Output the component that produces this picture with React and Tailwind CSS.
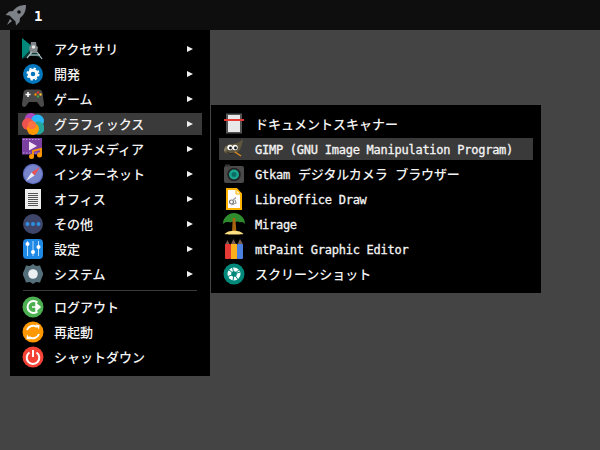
const font = { fontFamily: '"DejaVu Sans Mono","Noto Sans CJK JP",monospace' };

function I({ children }) {
  return <svg width="22" height="22" viewBox="0 0 22 22" className="shrink-0">{children}</svg>;
}

const Acc = () => <I>
  <path d="M0 0 L11 9 L0 21Z" fill="#00897b" />
  <path d="M0 21 L11 9 L21 21 L14 18 L8 18Z" fill="#0a3a36" />
  <path d="M9 4h5l.5 4 1.500 1-1 6H8l-1-6 1.500-1z" fill="#7f8589" />
  <circle cx="11.500" cy="9" r="1.800" fill="#e8e8e8" />
  <path d="M5 20 L10 14M20 21 L15 14" stroke="#b0bec5" strokeWidth="1.200" />
  <path d="M8 17h10" stroke="#cfd8dc" strokeWidth="1" />
</I>;
const Dev = () => <I>
  <circle cx="11" cy="11" r="10" fill="#0277bd" />
  <circle cx="11" cy="11" r="3.800" fill="none" stroke="#fff" strokeWidth="3" />
  <circle cx="11" cy="11" r="5.800" fill="none" stroke="#fff" strokeWidth="1.500" strokeDasharray="2.300 2.250" />
</I>;
const Game = () => <I>
  <path d="M5 1.500h12c2 0 3 1 3.500 3L22 16c.3 3-2.500 4-4 2l-3-4H7l-3 4c-1.500 2-4.300 1-4-2L1.500 4.500C2 2.500 3 1.500 5 1.500z" fill="#4a4a4a" />
  <path d="M3.500 6.500h5M6 4v5" stroke="#fff" strokeWidth="1.600" />
  <circle cx="16" cy="4.500" r="1.200" fill="#e53935" />
  <circle cx="18.500" cy="6.500" r="1.200" fill="#fbc02d" />
  <circle cx="13.500" cy="6.500" r="1.200" fill="#fb8c00" />
  <circle cx="16" cy="8.500" r="1.200" fill="#43a047" />
</I>;
const Gfx = () => <I>
  <circle cx="9" cy="6.500" r="6.500" fill="#ab47bc" />
  <circle cx="15.500" cy="8" r="6.500" fill="#29b6f6" />
  <circle cx="16" cy="15" r="6.500" fill="#26a69a" />
  <circle cx="6" cy="11" r="6" fill="#ef5350" />
  <circle cx="11" cy="16" r="6" fill="#ff9800" />
  <circle cx="10" cy="12" r="4" fill="#ff7043" />
</I>;
const Media = () => <I>
  <rect x="0" y="0" width="20" height="16.500" fill="#7b3fa0" />
  <path d="M1 1.500h18M1 15h18" stroke="#b39ddb" strokeWidth="1.200" strokeDasharray="1.500 1.500" />
  <path d="M7 3.500l8 4.500-8 4.500z" fill="#f3e5f5" />
  <path d="M11 18V13l8-2v6" fill="none" stroke="#ff9800" strokeWidth="1.800" />
  <circle cx="9.500" cy="18.500" r="2.500" fill="#ff9800" />
  <circle cx="17.500" cy="17" r="2.500" fill="#ff9800" />
</I>;
const Net = () => <I>
  <circle cx="11" cy="11" r="10.200" fill="#5c6bc0" />
  <circle cx="11" cy="11" r="9" fill="#7986cb" />
  <path d="M18 4 L12.500 12.500 L9.500 9.500Z" fill="#ef5350" />
  <path d="M4 18 L9.500 9.500 L12.500 12.500Z" fill="#e8eaf6" />
</I>;
const Office = () => <I>
  <rect x="3" y="1" width="16" height="20" fill="#eeeeee" />
  <path d="M6 5.500h10M6 7.500h10M6 9.500h10M6 11.500h10M6 13.500h10M6 15.500h10M6 17.500h10" stroke="#555" strokeWidth="1" />
</I>;
const Other = () => <I>
  <circle cx="11" cy="11" r="10" fill="#3f4568" />
  <circle cx="5.500" cy="11" r="2" fill="#2f8fe0" />
  <circle cx="11" cy="11" r="2" fill="#2f8fe0" />
  <circle cx="16.500" cy="11" r="2" fill="#2f8fe0" />
</I>;
const Settings = () => <I>
  <rect x="1" y="1" width="20" height="20" rx="4" fill="#1e88e5" />
  <path d="M5.500 3v15M11 3v15M16.500 3v15" stroke="#bbdefb" strokeWidth="1" />
  <circle cx="5.500" cy="6" r="2" fill="#fff" />
  <circle cx="11" cy="14" r="2" fill="#fff" />
  <circle cx="16.500" cy="9" r="2" fill="#fff" />
</I>;
const Sys = () => <I>
  <path d="M11 1l3 2 4-.5 1.500 4L21 10v2l-1.500 3.500-1.500 4-4-.5-3 2-3-2-4 .5-1.500-4L1 12v-2l1.500-3.500 1.500-4 4 .5z" fill="#546e7a" />
  <circle cx="11" cy="11" r="4.800" fill="#eceff1" />
</I>;
const Logout = () => <I>
  <circle cx="11" cy="11" r="10.500" fill="#4caf50" />
  <path d="M15.500 6.500A6 6 0 1 0 15.500 15.500" fill="none" stroke="#fff" strokeWidth="2" />
  <path d="M10 11h5M14 7.500l4 3.500-4 3.500z" fill="#fff" stroke="#fff" strokeWidth="1.500" />
</I>;
const Reboot = () => <I>
  <circle cx="11" cy="11" r="10.500" fill="#ff9800" />
  <path d="M5 9a6.500 6.500 0 0 1 10-3" fill="none" stroke="#fff" strokeWidth="2" />
  <path d="M17 13a6.500 6.500 0 0 1-10 3" fill="none" stroke="#fff" strokeWidth="2" />
  <path d="M13.500 3.500l4 .5-.5 4.500zM8.500 18.500l-4-.5.5-4.500z" fill="#fff" />
</I>;
const Power = () => <I>
  <circle cx="11" cy="11" r="10.500" fill="#f44336" />
  <path d="M7.500 6.500a6.300 6.300 0 1 0 7 0" fill="none" stroke="#fff" strokeWidth="2" />
  <path d="M11 4v7" stroke="#fff" strokeWidth="2" />
</I>;
const Scanner = () => <I>
  <rect x="3" y="0.500" width="16" height="20" fill="#545454" />
  <rect x="5" y="2" width="12" height="17" fill="#e8e8e8" />
  <rect x="1" y="6" width="20" height="2" fill="#e53935" />
</I>;
const Gimp = () => <I>
  <path d="M1 13c0-4 3-7 7-7 5 0 9-2 12-5-1 6-2 12-7 14-5 2-12 1-12-2z" fill="#5f5640" />
  <path d="M3 8c-1 1-2 3-2 5 2 1 3-1 3-3z" fill="#8a7f63" />
  <circle cx="7" cy="9.500" r="2.700" fill="#fff" />
  <circle cx="12" cy="9.500" r="2.700" fill="#fff" />
  <circle cx="7.500" cy="10" r="1.400" fill="#111" />
  <circle cx="12.500" cy="10" r="1.400" fill="#111" />
  <path d="M12 14l6 4" stroke="#d68a1e" strokeWidth="1.500" />
  <path d="M4 14c2 2 5 2 7 1" stroke="#222" strokeWidth="1" fill="none" />
</I>;
const Gtkam = () => <I>
  <rect x="1" y="3" width="20" height="17" rx="2" fill="#4a4a4a" />
  <rect x="2" y="1.500" width="5" height="2" fill="#333" />
  <circle cx="11" cy="11.500" r="6.800" fill="#222" />
  <circle cx="11" cy="11.500" r="5" fill="#1aa38e" />
  <circle cx="11" cy="11.500" r="2.500" fill="#0b6d62" />
</I>;
const Draw = () => <I>
  <path d="M4 1h9.500l4.500 5v15h-14z" fill="#fff" stroke="#ffb300" strokeWidth="2" />
  <path d="M13 1.500v4.500h4.500" fill="#fff3c4" stroke="#ffb300" strokeWidth="1" />
  <circle cx="8.500" cy="14" r="2" fill="none" stroke="#777" strokeWidth="1.200" />
  <path d="M10 12l3-2.500M8.500 17l4.500-2-1-3" fill="none" stroke="#999" strokeWidth="1.200" />
</I>;
const Mirage = () => <I>
  <path d="M0 11C0 4 6 0 11 0s11 4 11 11c-2-2-3.500-2.500-5-1.500-1.500-1.500-3.500-1.500-5 0-1.500-1-3.500-1-5 0C5 8.500 2 9 0 11z" fill="#2e8b2e" />
  <path d="M9.800 5h2.400l1.300 14h-4.500z" fill="#a8640f" />
  <path d="M1.500 21c3-4.500 16-4.500 19 0 0 .6-19 .6-19 0z" fill="#ffe082" />
</I>;
const MtPaint = () => <I>
  <path d="M2 7l2.500-5L7 7zM8 6l2.500-5L13 6zM14.500 6l2.500-5 3 5z" fill="#7a5c50" />
  <rect x="2" y="6" width="6" height="15" rx="1" fill="#e53935" />
  <rect x="8" y="6" width="6" height="15" fill="#fbb01b" />
  <rect x="14" y="6" width="6" height="15" rx="1" fill="#4a80e0" />
</I>;
const Shot = () => <I>
  <circle cx="11" cy="11" r="10.500" fill="#00897b" />
  <circle cx="11" cy="11" r="6.500" fill="#fff" />
  <path d="M11 11L9.500 4.500M11 11l6.200-2M11 11l4 5.500M11 11l-6 2.500M11 11L5.500 6.500M11 11l-1 6.500M11 11l5.500-4.500" stroke="#00897b" strokeWidth="1" />
  <circle cx="11" cy="11" r="2.800" fill="#00897b" />
</I>;

const L = ({ children }) => <span className="text-[12px] tracking-[-0.25px] [-webkit-text-stroke:0.3px_#f4f4f4]">{children}</span>;

const main = [
  [Acc, "アクセサリ", 1], [Dev, "開発", 1], [Game, "ゲーム", 1], [Gfx, "グラフィックス", 1, 1],
  [Media, "マルチメディア", 1], [Net, "インターネット", 1], [Office, "オフィス", 1], [Other, "その他", 1],
  [Settings, "設定", 1], [Sys, "システム", 1],
];
const bottom = [[Logout, "ログアウト"], [Reboot, "再起動"], [Power, "シャットダウン"]];
const sub = [
  [Scanner, "ドキュメントスキャナー"],
  [Gimp, <L>GIMP (GNU Image Manipulation Program)</L>, 0, 1],
  [Gtkam, <><L>Gtkam</L><span className="ml-[8px] tracking-[-0.1px]">デジタルカメラ ブラウザー</span></>],
  [Draw, <L>LibreOffice Draw</L>],
  [Mirage, <L>Mirage</L>],
  [MtPaint, <L>mtPaint Graphic Editor</L>],
  [Shot, "スクリーンショット"],
];

function Row({ icon: Icon, label, arrow, active }) {
  return (
    <div className={`h-[22px] flex items-center pl-[4px] pr-[9px] gap-[10px] text-[13px] font-medium text-[#f4f4f4] whitespace-nowrap ${active ? "bg-[#3a3a3a]" : ""}`}>
      <Icon />
      <span className="flex-1 pt-[2px]">{label}</span>
      {arrow ? <span className="w-0 h-0 border-y-[3px] border-y-transparent border-l-[6px] border-l-[#f0f0f0]" /> : null}
    </div>
  );
}

export default function App() {
  return (
    <div className="w-[600px] h-[450px] overflow-hidden bg-[#444444] flex flex-col" style={font}>
      <div className="h-[30px] shrink-0 bg-[#0e0e0e] flex items-center pl-[5px] gap-[7px]">
        <svg width="22" height="22" viewBox="0 0 22 22">
          <path d="M21 1c-6 0-10 2-13 6l-4 .5L0.500 11l4 .5 6 6 .5 4 3.500-3.500.5-4c4-3 6-7 6-13z" fill="#7d8288" />
          <path d="M5 15l2 2-5 4z" fill="#7d8288" />
          <circle cx="14" cy="8" r="1.800" fill="#0e0e0e" />
        </svg>
        <span className="text-[14px] font-bold text-white pt-[2px]">1</span>
      </div>
      <div className="flex items-start pl-[10px] gap-[1px]">
        <div className="w-[200px] bg-black p-[8px] flex flex-col gap-[3px]">
          {main.map(([i, l, a, h]) => <Row key={l} icon={i} label={l} arrow={a} active={h} />)}
          <div className="h-[1px] bg-[#3a3a3a] my-[2px] mx-[5px]" />
          {bottom.map(([i, l]) => <Row key={l} icon={i} label={l} />)}
        </div>
        <div className="w-[330px] mt-[75px] bg-black p-[8px] flex flex-col gap-[3px]">
          {sub.map(([i, l, a, h], n) => <Row key={n} icon={i} label={l} active={h} />)}
        </div>
      </div>
    </div>
  );
}
